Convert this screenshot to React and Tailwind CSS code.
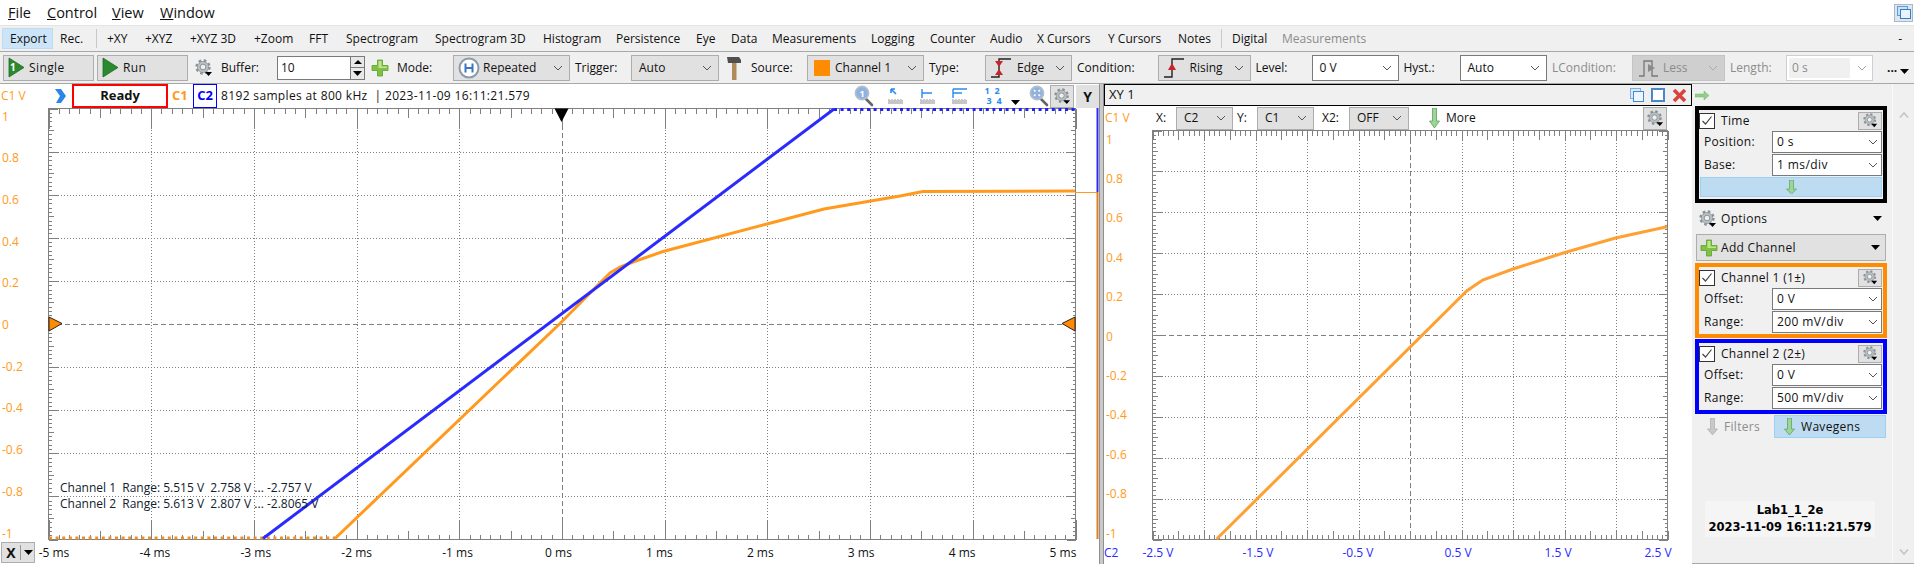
import { Fragment } from "react";

const TOOLS = [
  ["Rec.", "w-[36px]"],
  ["|", "w-[11px]"],
  ["+XY", "w-[38px]"],
  ["+XYZ", "w-[45px]"],
  ["+XYZ 3D", "w-[64px]"],
  ["+Zoom", "w-[55px]"],
  ["FFT", "w-[37px]"],
  ["Spectrogram", "w-[89px]"],
  ["Spectrogram 3D", "w-[108px]"],
  ["Histogram", "w-[73px]"],
  ["Persistence", "w-[80px]"],
  ["Eye", "w-[35px]"],
  ["Data", "w-[41px]"],
  ["Measurements", "w-[99px]"],
  ["Logging", "w-[59px]"],
  ["Counter", "w-[60px]"],
  ["Audio", "w-[47px]"],
  ["X Cursors", "w-[71px]"],
  ["Y Cursors", "w-[70px]"],
  ["Notes", "w-[43px]"],
  ["|", "w-[11px]"],
  ["Digital", "w-[50px]"],
];

function Chevron({ color = "#555" }) {
  return (
    <svg width="10" height="6" viewBox="0 0 10 6" className="shrink-0">
      <path d="M1 1 L5 5 L9 1" fill="none" stroke={color} strokeWidth="1" />
    </svg>
  );
}

function Tri({ className = "" }) {
  return (
    <svg width="9" height="5" viewBox="0 0 9 5" className={className}>
      <path d="M0 0 H9 L4.5 5 Z" fill="#000" />
    </svg>
  );
}

function Gear({ size = 18 }) {
  return (
    <svg width={size} height={size} viewBox="0 0 18 18" className="shrink-0">
      <circle cx="8" cy="8" r="6.5" fill="none" stroke="#8a9296" strokeWidth="2.4" strokeDasharray="2.6 2.5" />
      <circle cx="8" cy="8" r="5.6" fill="#b9c0c4" stroke="#7e868a" strokeWidth="0.6" />
      <circle cx="8" cy="8" r="2.8" fill="#eef0f1" stroke="#6f777b" strokeWidth="0.7" />
      <path d="M10 13 H17 L13.5 17 Z" fill="#000" />
    </svg>
  );
}

function GreenArrow({ height = 20, gray = false }) {
  const c1 = gray ? "#c8c8c8" : "#9ed49a";
  const c2 = gray ? "#a8a8a8" : "#4a9a48";
  return (
    <svg width="11" height={height} viewBox="0 0 11 20" preserveAspectRatio="none" className="shrink-0">
      <path d="M3.5 0 H7.5 V13 H10.5 L5.5 20 L0.5 13 H3.5 Z" fill={c1} stroke={c2} strokeWidth="0.7" />
    </svg>
  );
}

function Plus({ size = 18 }) {
  return (
    <svg width={size} height={size} viewBox="0 0 18 18" className="shrink-0">
      <path d="M6.5 1 H11.5 V6.5 H17 V11.5 H11.5 V17 H6.5 V11.5 H1 V6.5 H6.5 Z" fill="#7fc241" stroke="#5d9e33" strokeWidth="0.8" />
      <path d="M7.5 2 H10.5 V7.5 H16 V9 H7.5 Z" fill="#bfe58e" />
    </svg>
  );
}

function Play({ one = false }) {
  return (
    <svg width="17" height="21" viewBox="0 0 17 21" className="shrink-0">
      <path d="M1 1 L16 10.5 L1 20 Z" fill="#2b8a2f" stroke="#1d6d22" strokeWidth="0.8" />
      {one && <text x="2" y="14" fontSize="10" fontWeight="700" fill="#fff">1</text>}
    </svg>
  );
}

function Lens({ center }) {
  return (
    <svg width="20" height="22" viewBox="0 0 20 22" className="shrink-0">
      <path d="M12 14 L18 20" stroke="#666" strokeWidth="2.6" strokeLinecap="round" />
      <circle cx="8" cy="8" r="6.6" fill="#8fb2e0" stroke="#b5bfc9" strokeWidth="1.6" />
      {center}
    </svg>
  );
}

function Ruler({ children }) {
  return (
    <svg width="18" height="18" viewBox="0 0 18 18" className="shrink-0">
      <rect x="1" y="13" width="15" height="4" fill="#c6c6c6" />
      <path d="M2 13 V12 M5 13 V12 M8 13 V12 M11 13 V12 M14 13 V12" stroke="#999" strokeWidth="1" />
      {children}
    </svg>
  );
}

function Label({ children, className = "", muted = false }) {
  return (
    <span className={`shrink-0 whitespace-nowrap ${muted ? "text-[#8c8c8c]" : ""} ${className}`}>{children}</span>
  );
}

function ToolSelect({ className, text, icon, white = false }) {
  return (
    <div className={`h-[26px] shrink-0 flex items-center px-[4px] border ${white ? "bg-white border-[#7a7a7a]" : "bg-[#e1e1e1] border-[#adadad]"} ${className}`}>
      {icon}
      <span className="flex-1 pl-[3px] whitespace-nowrap">{text}</span>
      <span className="pr-[2px]"><Chevron /></span>
    </div>
  );
}

function BoxSelect({ text }) {
  return (
    <div className="ml-auto w-[110px] h-[22px] mb-[1px] bg-white border border-[#7a7a7a] flex items-center pl-[4px] pr-[3px] justify-between">
      <span className="tracking-[0.4px]">{text}</span>
      <Chevron />
    </div>
  );
}

function GearButton() {
  return (
    <div className="w-[24px] h-[18px] bg-[#e1e1e1] border border-[#adadad] flex items-center justify-center">
      <Gear size={15} />
    </div>
  );
}

function ChannelBox({ title, border, rows, children, className = "" }) {
  return (
    <div className={`w-[192px] ml-[3px] border-4 ${border} ${className}`}>
      <div className="h-[21px] flex items-center">
        <div className="w-[16px] h-[16px] bg-white border border-[#333] flex items-center justify-center">
          <svg width="12" height="11" viewBox="0 0 12 11">
            <path d="M1.5 6 L4.5 9 L10.5 1.5" fill="none" stroke="#444" strokeWidth="1.2" />
          </svg>
        </div>
        <span className="ml-[6px] flex-1 whitespace-nowrap tracking-[0.3px]">{title}</span>
        <span className="mr-[1px]"><GearButton /></span>
      </div>
      {rows.map(([name, value]) => (
        <div key={name} className="flex items-center pr-[1px] pl-[5px]">
          <span className="w-[60px] pb-[1px] whitespace-nowrap tracking-[0.3px]">{name}</span>
          <BoxSelect text={value} />
        </div>
      ))}
      {children}
    </div>
  );
}

// axis ticks and grid, in page coordinates
function Grid({ x0, x1, y0, y1, nx, ny, majorX, majorY }) {
  const dx = (x1 - x0) / nx;
  const dy = (y1 - y0) / ny;
  let ticks = `M${x0} ${y0} H${x1} V${y1} H${x0} Z `;
  for (let i = 0; i <= nx * 10; i++) {
    const x = Math.round(x0 + (i * dx) / 10) + 0.5;
    const len = i % 10 === 0 ? majorX : i % 5 === 0 ? 9 : 5;
    ticks += `M${x} ${y0} v${len} M${x} ${y1} v${-len} `;
  }
  for (let i = 0; i <= ny * 10; i++) {
    const y = Math.round(y0 + (i * dy) / 10) + 0.5;
    const len = i % 10 === 0 ? majorY : i % 5 === 0 ? 5 : 3;
    ticks += `M${x0} ${y} h${len} M${x1} ${y} h${-len} `;
  }
  const cx = Math.round(x0 + (nx / 2) * dx) + 0.5;
  const cy = Math.round(y0 + ((ny / 2 + (ny % 2 ? 0 : 0)) * dy)) + 0.5;
  return (
    <g shapeRendering="crispEdges" fill="none" stroke="#808080" strokeWidth="1">
      {Array.from({ length: nx - 1 }, (_, i) => {
        const x = Math.round(x0 + (i + 1) * dx) + 0.5;
        const center = i + 1 === nx / 2;
        return (
          <line key={i} x1={x} x2={x} y1={y0} y2={y1} strokeDasharray={center ? "5 3" : "1 2"} />
        );
      })}
      {Array.from({ length: ny - 1 }, (_, i) => {
        const y = Math.round(y0 + (i + 1) * dy) + 0.5;
        const center = i + 1 === ny / 2;
        return (
          <line key={i} x1={x0} x2={x1} y1={y} y2={y} strokeDasharray={center ? "5 3" : "1 2"} />
        );
      })}
      <path d={ticks} strokeWidth="1" />
      <path d="" data-c={cx + cy} />
    </g>
  );
}

const Y_LABELS = ["1", "0.8", "0.6", "0.4", "0.2", "0", "-0.2", "-0.4", "-0.6", "-0.8", "-1"];
const X_LEFT = ["-5 ms", "-4 ms", "-3 ms", "-2 ms", "-1 ms", "0 ms", "1 ms", "2 ms", "3 ms", "4 ms", "5 ms"];
const X_XY = ["-2.5 V", "-1.5 V", "-0.5 V", "0.5 V", "1.5 V", "2.5 V"];

function TimePlot() {
  return (
    <div className="relative">
      <svg width="1099" height="456" viewBox="0 108 1099 456" className="block">
        {Y_LABELS.map((t, i) => (
          <text key={t} x="2" y={120.5 + i * 41.7} fill="#ff9a20" fontSize="12">{t}</text>
        ))}
        <Grid x0={48.5} x1={1075.5} y0={108.5} y1={539.5} nx={10} ny={10} majorX={20} majorY={9} />
        <polyline points="335,538.5 560,323.5 600,283 610,273 620,267 633,262 663,251.5 767,224 824,209 900,196 923,191.5 1075,191" fill="none" stroke="#ff9a1e" strokeWidth="3" />
        <line x1="49" x2="335" y1="538" y2="538" stroke="#e8912c" strokeWidth="3" strokeDasharray="3 3.6" />
        <polyline points="263,538.5 834,109" fill="none" stroke="#2a2aff" strokeWidth="3" />
        <line x1="834" x2="1075" y1="109.5" y2="109.5" stroke="#1f1fff" strokeWidth="3" strokeDasharray="3 3.6" />
        <path d="M554.5 108.5 H568.5 L561.5 122 Z" fill="#000" />
        <path d="M49 317 L62 323.5 L49 331 Z" fill="#ff8c00" stroke="#222" strokeWidth="1" />
        <path d="M1075 317 L1062 323.5 L1075 331 Z" fill="#ff8c00" stroke="#222" strokeWidth="1" />
        <path d="M1075 192.5 H1097" stroke="#ff9a1e" strokeWidth="1" />
        <line x1="1097.5" x2="1097.5" y1="108" y2="192" stroke="#2a2aff" strokeWidth="2" />
        <line x1="1097.5" x2="1097.5" y1="192" y2="539" stroke="#dc7f22" strokeWidth="2" />
        <text x="60" y="492" fontSize="12" fill="#10202e" xmlSpace="preserve">Channel 1  Range: 5.515 V  2.758 V ... -2.757 V</text>
        <text x="60" y="508" fontSize="12" fill="#10202e" xmlSpace="preserve">Channel 2  Range: 5.613 V  2.807 V ... -2.8065 V</text>
        {X_LEFT.map((t, i) => (
          <text key={t} x={54 + i * 100.9} y="557" textAnchor="middle" fontSize="12" fill="#111">{t}</text>
        ))}
      </svg>
      <div className="absolute left-[1px] top-[434px] w-[34px] h-[21px] bg-[#e1e1e1] border border-[#adadad] flex items-center">
        <span className="w-[18px] text-center font-bold text-[14px]">X</span>
        <span className="w-px h-[15px] bg-[#999]" />
        <Tri className="ml-[3px]" />
      </div>
    </div>
  );
}

function XYPlot() {
  return (
    <svg width="588" height="434" viewBox="1104 130 588 434" className="block">
      {Y_LABELS.map((t, i) => (
        <text key={t} x="1106" y={143.5 + i * 39.4} fill="#ff9a20" fontSize="12">{t}</text>
      ))}
      <Grid x0={1152.5} x1={1667.5} y0={130.5} y1={539.5} nx={10} ny={10} majorX={9} majorY={9} />
      <polyline
        points="1216.7,539 1467,290.7 1482.7,280 1513,269 1564,252.7 1615.5,238 1667,226.7"
        fill="none"
        stroke="#ffa033"
        strokeWidth="3"
      />
      <text x="1104" y="557" fill="#2a2aff" fontSize="12">C2</text>
      {X_XY.map((t, i) => (
        <text key={t} x={1158 + i * 100} y="557" textAnchor="middle" fontSize="12" fill="#2a2aff">{t}</text>
      ))}
    </svg>
  );
}

export default function App() {
  return (
    <div className="w-[1914px] h-[564px] overflow-hidden bg-white flex flex-col font-['Open_Sans',sans-serif] text-[12px] text-[#111]">
      {/* Menu */}
      <div className="h-[25px] flex items-center pl-[8px] text-[14.5px] relative shrink-0">
        <span className="w-[39px]"><span className="underline">F</span>ile</span>
        <span className="w-[65px]"><span className="underline">C</span>ontrol</span>
        <span className="w-[48px]"><span className="underline">V</span>iew</span>
        <span><span className="underline">W</span>indow</span>
        <div className="ml-auto mr-[1px] w-[19px] h-[18px] bg-[#dfe6ee] border border-[#a9b8c6] flex items-center justify-center">
          <svg width="14" height="13" viewBox="0 0 14 13">
            <rect x="0.5" y="0.5" width="10" height="9" fill="#cfe0f2" stroke="#5c9bdc" />
            <rect x="3.5" y="3.5" width="10" height="9" fill="#eaf3fb" stroke="#2f7fd1" />
          </svg>
        </div>
      </div>

      {/* Instrument tabs */}
      <div className="h-[27px] shrink-0 flex items-center bg-[#f0f0f0] border-t border-t-[#e4e4e4] border-b border-b-[#a8a8a8]">
        <div className="ml-[2px] w-[51px] h-[21px] pl-[7px] flex items-center bg-[#cce4f7] border border-[#bedcf1] mr-[7px]">Export</div>
        {TOOLS.map(([text, w], i) => (
          <Fragment key={i}>
            {text === "|" ? (
              <span className={`${w} h-[19px] flex`}><span className="w-px h-full bg-[#c8c8c8]" /></span>
            ) : (
              <span className={`${w} shrink-0 whitespace-nowrap`}>{text}</span>
            )}
          </Fragment>
        ))}
        <span className="text-[#8c8c8c]">Measurements</span>
        <span className="ml-auto mr-[12px]">-</span>
      </div>

      {/* Acquisition and trigger */}
      <div className="h-[32px] shrink-0 flex items-center bg-[#f0f0f0] border-b border-b-[#a8a8a8] pl-[3px]">
        <div className="w-[91px] h-[26px] bg-[#e1e1e1] border border-[#adadad] flex items-center pl-[4px] gap-[4px] shrink-0">
          <Play one />
          <span className="tracking-[0.4px]">Single</span>
        </div>
        <div className="ml-[3px] w-[91px] h-[26px] bg-[#e1e1e1] border border-[#adadad] flex items-center pl-[4px] gap-[4px] shrink-0">
          <Play />
          <span className="tracking-[0.4px]">Run</span>
        </div>
        <span className="ml-[7px]"><Gear /></span>
        <Label className="ml-[8px] w-[56px]">Buffer:</Label>
        <div className="w-[88px] h-[24px] bg-white border border-[#7a7a7a] flex items-center pl-[3px] shrink-0">
          <span className="flex-1">10</span>
          <div className="w-[14px] h-full flex flex-col border-l border-[#7a7a7a]">
            <div className="flex-1 bg-[#e8e8e8] border-b border-[#7a7a7a] flex items-center justify-center">
              <svg width="8" height="4" viewBox="0 0 8 4"><path d="M0 4 L4 0 L8 4 Z" fill="#000" /></svg>
            </div>
            <div className="flex-1 bg-[#e8e8e8] flex items-center justify-center"><Tri /></div>
          </div>
        </div>
        <span className="ml-[6px]"><Plus /></span>
        <Label className="ml-[8px] w-[56px]">Mode:</Label>
        <ToolSelect
          className="w-[117px]"
          text="Repeated"
          icon={
            <svg width="22" height="22" viewBox="0 0 22 22" className="shrink-0">
              <circle cx="11" cy="11" r="9.5" fill="#fff" stroke="#8b9aaa" strokeWidth="2" />
              <path d="M7.5 6.5 V15.5 M14.5 6.5 V15.5 M7.5 11 H14.5" stroke="#3a76c4" strokeWidth="2" />
            </svg>
          }
        />
        <Label className="ml-[5px] w-[56px]">Trigger:</Label>
        <ToolSelect className="w-[88px]" text="Auto" />
        <span className="ml-[7px] shrink-0">
          <svg width="16" height="24" viewBox="0 0 16 24" className="block">
            <rect x="6" y="6" width="4.5" height="18" fill="#b08a5a" />
            <path d="M1 1 H13 L15 4 V7 H2 Z" fill="#4f4f4f" />
          </svg>
        </span>
        <Label className="ml-[9px] w-[56px]">Source:</Label>
        <ToolSelect
          className="w-[117px]"
          text={<span className="pl-[2px]">Channel 1</span>}
          icon={<span className="ml-[2px] w-[16px] h-[16px] bg-[#ff8c00] shrink-0" />}
        />
        <Label className="ml-[5px] w-[56px]">Type:</Label>
        <ToolSelect
          className="w-[87px]"
          text="Edge"
          icon={
            <svg width="24" height="22" viewBox="0 0 24 22" className="shrink-0">
              <path d="M1 20 H9 V2 H21" fill="none" stroke="#222" strokeWidth="1.4" />
              <path d="M5 4 L13 4 L9 10 Z M5 18 L13 18 L9 12 Z" fill="#c8242b" />
            </svg>
          }
        />
        <Label className="ml-[5px] w-[80.5px]">Condition:</Label>
        <ToolSelect
          className="w-[93px]"
          text="Rising"
          icon={
            <svg width="24" height="22" viewBox="0 0 24 22" className="shrink-0">
              <path d="M1 20 H9 V2 H21" fill="none" stroke="#222" strokeWidth="1.4" />
              <path d="M5 13 L9 6 L13 13 Z" fill="#c8242b" />
            </svg>
          }
        />
        <Label className="ml-[5px] w-[56px]">Level:</Label>
        <ToolSelect white className="w-[87px]" text="0 V" />
        <Label className="ml-[5px] w-[56px]">Hyst.:</Label>
        <ToolSelect white className="w-[87.5px]" text="Auto" />
        <Label muted className="ml-[5px] w-[80px]">LCondition:</Label>
        <div className="w-[93px] h-[26px] bg-[#cfcfcf] border border-[#c4c4c4] flex items-center px-[4px] shrink-0 text-[#8c8c8c]">
          <svg width="24" height="22" viewBox="0 0 24 22" className="shrink-0">
            <path d="M2 19 H7 V4 H15 V19 H21" fill="none" stroke="#777" strokeWidth="1.3" />
            <path d="M11 7 L18 11 L11 15 Z" fill="#8a8a8a" />
          </svg>
          <span className="flex-1 pl-[2px]">Less</span>
          <span className="pr-[2px]"><Chevron color="#aaa" /></span>
        </div>
        <Label muted className="ml-[5px] w-[56px]">Length:</Label>
        <div className="w-[87px] h-[26px] bg-white border border-[#cfcfcf] flex items-center px-[2px] shrink-0 text-[#8c8c8c]">
          <span className="w-[61px] h-[20px] bg-[#f0f0f0] flex items-center pl-[3px]">0 s</span>
          <span className="ml-[7px]"><Chevron color="#aaa" /></span>
        </div>
        <span className="ml-[14px] font-bold leading-none">...</span>
        <Tri className="ml-[3px] mt-[8px]" />
      </div>

      {/* Workspace */}
      <div className="flex-1 flex min-h-0">
        {/* Time plot */}
        <div className="w-[1099px] shrink-0 flex flex-col">
          <div className="h-[24px] flex items-center shrink-0">
            <span className="w-[53px] pl-[1px] text-[#ff9a20]">C1 V</span>
            <svg width="14" height="16" viewBox="0 0 14 16" className="shrink-0">
              <path d="M2 1 L8 1 L13 8 L8 15 L3 15 L7 8 Z" fill="#2a86e8" />
            </svg>
            <div className="ml-[5px] w-[96px] h-[24px] border-2 border-[#ff0000] flex items-center justify-center font-bold text-[13px]">Ready</div>
            <span className="ml-[4px] w-[21px] font-bold text-[13px] text-[#ff9a20]">C1</span>
            <div className="w-[24px] h-[24px] border border-[#0000ff] flex items-center justify-center font-bold text-[13px] text-[#0000ff]">C2</div>
            <span className="ml-[4px] whitespace-pre tracking-[0.35px]">8192 samples at 800 kHz  | 2023-11-09 16:11:21.579</span>
            <div className="ml-auto flex items-center">
              <Lens center={<text x="5.5" y="11.5" fontSize="9" fontWeight="700" fill="#fff">1</text>} />
              <span className="ml-[13px]">
                <Ruler><path d="M4 2 L9 7 M4 2 H8 M4 2 V6" fill="none" stroke="#2a8cf0" strokeWidth="1.6" /></Ruler>
              </span>
              <span className="ml-[14px]">
                <Ruler><path d="M3 2 V11 M3 6 H13" fill="none" stroke="#2a8cf0" strokeWidth="1.4" /></Ruler>
              </span>
              <span className="ml-[14px]">
                <Ruler><path d="M2 2 V11 M2 2 H16 M2 6 H11" fill="none" stroke="#2a8cf0" strokeWidth="1.4" /></Ruler>
              </span>
              <div className="ml-[13px] w-[20px] grid grid-cols-2 text-[9px] leading-[10px] font-bold text-[#2a8cf0] text-center">
                <span>1</span><span>2</span><span className="pl-[4px]">3</span><span className="pl-[4px]">4</span>
              </div>
              <Tri className="ml-[9px] mt-[12px]" />
              <span className="ml-[9px]">
                <Lens center={<path d="M5 5 L6.5 6.5 M11 5 L9.5 6.5 M5 11 L6.5 9.5 M11 11 L9.5 9.5" stroke="#fff" strokeWidth="1.6" />} />
              </span>
              <div className="ml-[1px] w-[24px] h-[23px] bg-[#e1e1e1] border border-[#adadad] flex items-center justify-center">
                <Gear size={17} />
              </div>
              <div className="ml-[2px] w-[23px] h-[23px] bg-[#e1e1e1] flex items-center justify-center font-bold text-[14px]">Y</div>
            </div>
          </div>
          <TimePlot />
        </div>

        {/* Splitter */}
        <div className="w-[5px] shrink-0 bg-[#c9c9c9] border-x border-[#8f8f8f]" />

        {/* XY plot */}
        <div className="w-[588px] shrink-0 flex flex-col">
          <div className="h-[22px] shrink-0 flex items-center bg-[#f0f0f0] border border-black pl-[4px] text-[13px]">
            <span className="flex-1">XY 1</span>
            <svg width="14" height="14" viewBox="0 0 14 14" className="shrink-0">
              <rect x="0.5" y="0.5" width="10" height="10" fill="#dbe8f6" stroke="#7fb0e3" />
              <rect x="3.5" y="3.5" width="10" height="10" fill="#eef5fc" stroke="#3f8ad8" />
            </svg>
            <svg width="14" height="14" viewBox="0 0 14 14" className="ml-[7px] shrink-0">
              <rect x="1" y="1" width="12" height="12" fill="#fff" stroke="#3f8ad8" strokeWidth="2" />
              <path d="M1 3 L3 1 M11 1 L13 3 M1 11 L3 13 M11 13 L13 11" stroke="#e8673c" strokeWidth="1" />
            </svg>
            <svg width="15" height="15" viewBox="0 0 15 15" className="ml-[7px] mr-[4px] shrink-0">
              <path d="M2 2 L13 13 M13 2 L2 13" stroke="#d8433e" strokeWidth="3.6" />
            </svg>
          </div>
          <div className="h-[24px] shrink-0 flex items-center">
            <span className="w-[51px] pl-[1px] text-[#ff9a20]">C1 V</span>
            <span className="w-[21px] pl-[1px]">X:</span>
            <ToolSelect className="w-[57px] !h-[23px]" text="C2" />
            <span className="w-[24px] pl-[4px]">Y:</span>
            <ToolSelect className="w-[57px] !h-[23px]" text="C1" />
            <span className="w-[35px] pl-[8px]">X2:</span>
            <ToolSelect className="w-[60px] !h-[23px]" text="OFF" />
            <span className="ml-[20px]"><GreenArrow /></span>
            <span className="ml-[6px]">More</span>
            <div className="ml-auto mr-[25px] w-[24px] h-[23px] bg-[#e1e1e1] border border-[#adadad] flex items-center justify-center">
              <Gear size={17} />
            </div>
          </div>
          <XYPlot />
        </div>

        {/* Side panel */}
        <div className="flex-1 flex bg-[#f0f0f0] border-b border-b-[#a8a8a8] min-w-0">
          <div className="w-[200px] shrink-0 flex flex-col">
            <div className="h-[22px] flex items-center pl-[3px]">
              <svg width="14" height="9" viewBox="0 0 14 9">
                <path d="M0 3 H9 V0 L14 4.5 L9 9 V6 H0 Z" fill="#8fd08a" stroke="#6cb868" strokeWidth="0.5" />
              </svg>
            </div>
            <ChannelBox
              title="Time"
              border="border-black"
              rows={[["Position:", "0 s"], ["Base:", "1 ms/div"]]}
            >
              <div className="mt-0 ml-[1px] mr-[1px] h-[20px] mb-[2px] bg-[#bedcf1] border border-[#9cd0f5] flex items-center justify-center">
                <GreenArrow height={14} />
              </div>
            </ChannelBox>
            <div className="h-[31px] shrink-0 flex items-center pl-[7px] pr-[10px]">
              <Gear />
              <span className="ml-[4px] flex-1 tracking-[0.3px]">Options</span>
              <Tri />
            </div>
            <div className="ml-[4px] w-[190px] h-[27px] shrink-0 bg-[#e1e1e1] border border-[#adadad] flex items-center pl-[3px] pr-[5px]">
              <Plus />
              <span className="ml-[3px] flex-1 tracking-[0.3px]">Add Channel</span>
              <Tri />
            </div>
            <ChannelBox
              className="mt-[2px]"
              title="Channel 1 (1±)"
              border="border-[#ff8c00]"
              rows={[["Offset:", "0 V"], ["Range:", "200 mV/div"]]}
            />
            <ChannelBox
              className="mt-[1px]"
              title="Channel 2 (2±)"
              border="border-[#0000ff]"
              rows={[["Offset:", "0 V"], ["Range:", "500 mV/div"]]}
            />
            <div className="mt-[1px] h-[23px] flex shrink-0">
              <div className="w-[82px] flex items-center pl-[15px] gap-[6px] text-[#8c8c8c] tracking-[0.3px]">
                <GreenArrow gray height={17} />
                Filters
              </div>
              <div className="w-[112px] bg-[#bedcf1] border border-[#9cd0f5] flex items-center pl-[9px] gap-[6px] tracking-[0.3px]">
                <GreenArrow height={17} />
                Wavegens
              </div>
            </div>
            <div className="mt-[63px] ml-[13px] w-[170px] h-[36px] shrink-0 bg-[#f5f5f5] flex flex-col items-center justify-center font-bold leading-[17px] text-black font-['DejaVu_Sans',sans-serif] text-[11.5px]">
              <span>Lab1_1_2e</span>
              <span>2023-11-09 16:11:21.579</span>
            </div>
          </div>
          <div className="flex-1 border-l border-l-[#fafafa] flex flex-col items-center justify-between pt-[28px] pb-[8px]">
            <svg width="10" height="6" viewBox="0 0 10 6"><path d="M1 5.5 L5 1 L9 5.5" fill="none" stroke="#c4c4c4" strokeWidth="1.6" /></svg>
            <svg width="10" height="6" viewBox="0 0 10 6"><path d="M1 0.5 L5 5 L9 0.5" fill="none" stroke="#c4c4c4" strokeWidth="1.6" /></svg>
          </div>
        </div>
      </div>
    </div>
  );
}
